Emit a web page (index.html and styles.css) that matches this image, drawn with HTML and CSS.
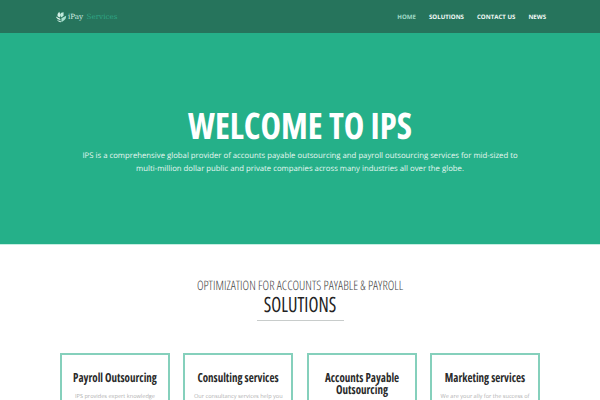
FILE: index.html
```html
<!DOCTYPE html>
<html lang="en">
<head>
<meta charset="utf-8">
<title>iPay Services</title>
<link rel="stylesheet" href="styles.css">
</head>
<body>
<header class="topbar">
  <a class="logo" href="#">
    <svg class="logo-icon" viewBox="0 0 14 14" width="12" height="12" aria-hidden="true">
      <path d="M3 6 C2.500 4 3.500 2.500 5 1 L6.500 5 L5.500 7.500 Z" fill="#d5f0e7"/>
      <path d="M6 4 C6.500 2.500 8 1.500 10 1.500 L10 5.500 L7 7.500 Z" fill="#bfe9db"/>
      <path d="M1 6.500 L6 9 L6.500 10.500 C4 10.500 2 9 1 6.500 Z" fill="#e6f7f1"/>
      <path d="M2 9.500 C3.500 11 5 11.500 6.500 11.300 L7 13 C5 13 3 12 2 9.500 Z" fill="#d5f0e7"/>
      <path d="M7.500 8.500 L13 5.500 C13 8 12 10 10 11.500 L7.500 13 Z" fill="#a8e0ce"/>
    </svg>
    <span class="logo-ipay">iPay</span><span class="logo-services"> Services</span>
  </a>
  <nav class="nav">
    <a class="nav-link is-active" href="#">HOME</a>
    <a class="nav-link" href="#">SOLUTIONS</a>
    <a class="nav-link" href="#">CONTACT US</a>
    <a class="nav-link" href="#">NEWS</a>
  </nav>
</header>
<section class="hero">
  <h1 class="hero-title">WELCOME TO IPS</h1>
  <p class="hero-text">IPS is a comprehensive global provider of accounts payable outsourcing and payroll outsourcing services for mid-sized to multi-million dollar public and private companies across many industries all over the globe.</p>
</section>
<section class="solutions">
  <p class="eyebrow">OPTIMIZATION FOR ACCOUNTS PAYABLE &amp; PAYROLL</p>
  <h2 class="section-title">SOLUTIONS</h2>
  <div class="rule"></div>
  <div class="cards">
    <article class="card"><h3>Payroll Outsourcing</h3><p>IPS provides expert knowledge</p></article>
    <article class="card"><h3>Consulting services</h3><p>Our consultancy services help you</p></article>
    <article class="card"><h3>Accounts Payable Outsourcing</h3></article>
    <article class="card"><h3>Marketing services</h3><p>We are your ally for the success of</p></article>
  </div>
</section>
</body>
</html>
```
FILE: styles.css
```css
* { box-sizing: border-box; }
html, body { margin: 0; height: 400px; overflow: hidden; background: #fff; }
body { font-family: "Open Sans", sans-serif; text-rendering: geometricPrecision; }
a { text-decoration: none; }

.topbar {
  height: 33px;
  background: #26745c;
  display: flex;
  align-items: center;
  justify-content: space-between;
  padding: 0 54px 0 55px;
}
.logo { display: flex; align-items: center; gap: 1px; font: 7.200px "DejaVu Serif", serif; white-space: pre; }
.logo-ipay { color: #d5efe6; }
.logo-services { color: #2fa585; }
.nav { display: flex; gap: 13px; }
.nav-link { font-size: 6.100px; font-weight: 700; color: #f2faf7; }
.nav-link.is-active { color: #9fd8c5; }

.hero {
  height: 212px;
  background: #25b089;
  border-bottom: 1px solid #c5efe2;
  color: #fff;
  text-align: center;
  padding-top: 69px;
}
.hero-title {
  margin: 0;
  font: 700 36.500px/46px "Open Sans", sans-serif;
  font-stretch: 75%;
  transform: scaleX(.95);
}
.hero-text {
  margin: 2px auto 0;
  width: 450px;
  font-size: 7.750px;
  line-height: 12.500px;
  color: #e6f7f1;
}

.solutions { text-align: center; padding-top: 32px; }
.eyebrow {
  margin: 0;
  font: 300 13px/16px "Open Sans", sans-serif;
  font-stretch: 75%;
  color: #444;
  transform: scaleX(.96);
}
.section-title {
  margin: 0;
  font: 400 21px/24px "Open Sans", sans-serif;
  font-stretch: 75%;
  color: #222;
  transform: scaleX(.87);
}
.rule { width: 87px; height: 1px; background: #c8cccb; margin: 3px auto 0; }
.cards {
  display: flex;
  justify-content: space-between;
  margin: 32px 60px 0;
}
.card {
  width: 110px;
  height: 120px;
  border: 2px solid #85d0bc;
  padding: 16.500px 2px 0;
}
.card h3 {
  margin: 0;
  font: 700 12.500px/12px "Open Sans", sans-serif;
  font-stretch: 75%;
  color: #2a2a2a;
  transform: scaleX(.88);
}
.card p {
  margin: 7px 0 0;
  font-size: 5.600px;
  line-height: 10px;
  color: #b0b0b0;
}
```
